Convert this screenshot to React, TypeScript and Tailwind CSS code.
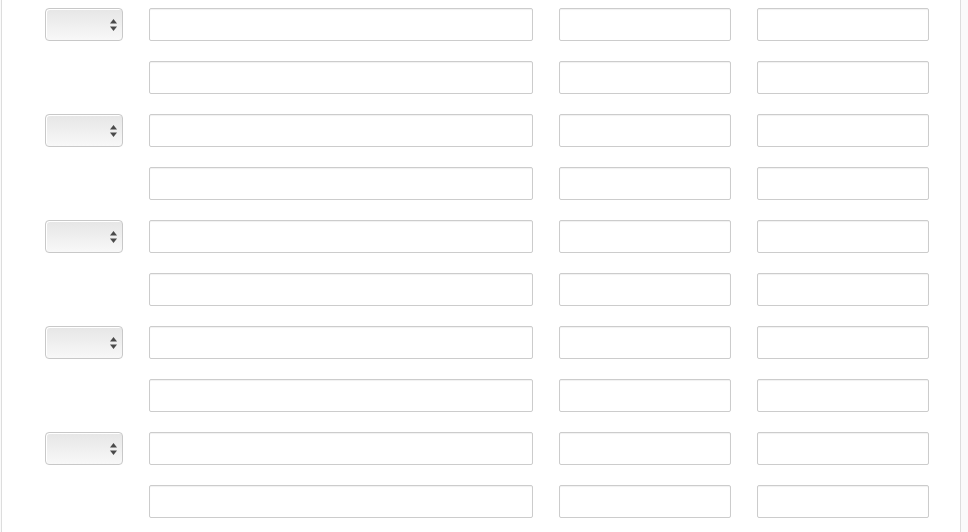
import React from 'react';

const rows = Array.from({ length: 10 }, (_, i) => i);

function Arrows() {
  return (
    <svg width="7" height="12" viewBox="0 0 7 12" className="absolute right-[5px] top-[10px]">
      <path d="M3.5 0 L7 4.5 L0 4.5 Z" fill="#4a4a4a" />
      <path d="M0 7.5 L7 7.5 L3.5 12 Z" fill="#4a4a4a" />
    </svg>
  );
}

function FakeSelect() {
  return (
    <div className="relative h-[33px] w-[78px] rounded-[4px] border border-[#c8c8c8] bg-gradient-to-b from-[#e6e6e6] to-[#f8f8f8] shadow-[inset_1px_1px_0_#fff]">
      <Arrows />
    </div>
  );
}

function TextBox({ w }: { w: string }) {
  return (
    <input
      type="text"
      className={`h-[33px] ${w} rounded-[2px] border border-[#cccccc] bg-white shadow-[inset_0_1px_1px_rgba(0,0,0,0.06)] outline-none`}
    />
  );
}

export default function App() {
  return (
    <div className="min-h-[532px] w-[968px] overflow-hidden bg-[#fafafa]" style={{ fontFamily: '"Liberation Sans", Arial, sans-serif' }}>
      <div className="ml-px h-[532px] w-[960px] border-x border-[#dddddd] bg-white">
        <div className="flex flex-col gap-[20px] pl-[43px] pt-[8px]">
          {rows.map((i) => (
            <div key={i} className="flex items-start">
              <div className="w-[104px]">{i % 2 === 0 && <FakeSelect />}</div>
              <TextBox w="w-[384px]" />
              <div className="w-[26px]" />
              <TextBox w="w-[172px]" />
              <div className="w-[26px]" />
              <TextBox w="w-[172px]" />
            </div>
          ))}
        </div>
      </div>
    </div>
  );
}
